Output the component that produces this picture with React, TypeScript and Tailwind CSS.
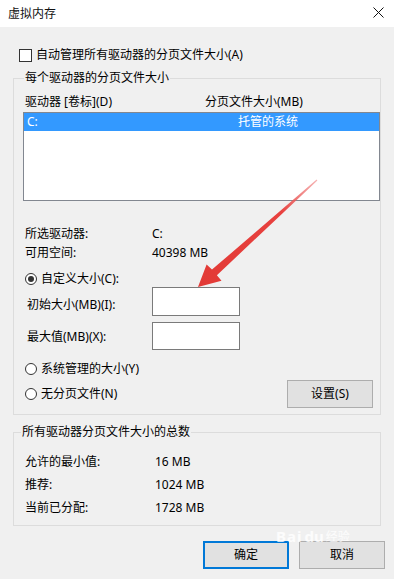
import React from "react";

const FONT = { fontFamily: '"Noto Sans", "Noto Sans CJK SC", sans-serif' };

const Radio = ({ checked, label }: { checked?: boolean; label: string }) => (
  <div className="flex h-[16px] items-center">
    <span className="ml-[11px] flex h-[12px] w-[12px] items-center justify-center rounded-full border border-[#333333] bg-white">
      {checked && <span className="h-[6px] w-[6px] rounded-full bg-[#333333]" />}
    </span>
    <span className="ml-[4px]">{label}</span>
  </div>
);

const InfoRow = ({ label, value, h, valueX }: { label: string; value: string; h: string; valueX: string }) => (
  <div className={`flex items-center ${h}`}>
    <span className={`shrink-0 pl-[11px] ${valueX}`}>{label}</span>
    <span>{value}</span>
  </div>
);

export default function App() {
  return (
    <div
      className="relative h-[579px] w-[394px] overflow-hidden bg-[#f0f0f0] text-[12px] leading-[16px] text-black"
      style={FONT}
    >
      {/* Title bar */}
      <div className="flex h-[27px] items-center justify-between bg-white pl-[8px] pr-[10px]">
        <span className="text-[12px] text-[#111]">虚拟内存</span>
        <svg width="11" height="11" viewBox="0 0 11 11" className="mb-[2px]">
          <path d="M0.5 0.5L10.5 10.5M10.5 0.5L0.5 10.5" stroke="#111" strokeWidth="1" />
        </svg>
      </div>

      <div className="flex flex-col pt-[20px]">
        {/* Auto manage checkbox */}
        <div className="flex h-[16px] items-center pl-[19px]">
          <span className="h-[13px] w-[13px] border border-[#333333] bg-white" />
          <span className="ml-[4px]">自动管理所有驱动器的分页文件大小(A)</span>
        </div>

        {/* Per-drive group */}
        <fieldset className="mx-[13px] mt-[7px] w-[368px] border border-[#dcdcdc] px-0 pb-[6px] pt-[8px]">
          <legend className="ml-[10px] px-[1px] leading-[16px]">每个驱动器的分页文件大小</legend>
          <div className="flex h-[16px] items-center pl-[11px]">
            <span className="w-[180px]">驱动器 [卷标](D)</span>
            <span>分页文件大小(MB)</span>
          </div>
          <div className="ml-[9px] mt-[2px] h-[89px] w-[357px] border border-[#828790] bg-white">
            <div className="flex h-[18px] items-center bg-[#3399ff] text-white">
              <span className="w-[214px] pl-[3px]">C:</span>
              <span>托管的系统</span>
            </div>
          </div>

          <div className="mt-[23px]">
            <InfoRow label="所选驱动器:" value="C:" h="h-[19px]" valueX="w-[138px]" />
            <InfoRow label="可用空间:" value="40398 MB" h="h-[19px]" valueX="w-[138px]" />
          </div>

          <div className="mt-[9px]">
            <Radio checked label="自定义大小(C):" />
          </div>
          <div className="flex h-[29px] items-center">
            <span className="w-[138px] pl-[13px] pt-[6px]">初始大小(MB)(I):</span>
            <span className="h-[29px] w-[88px] border border-[#7a7a7a] bg-white" />
          </div>
          <div className="mt-[6px] flex h-[28px] items-center">
            <span className="w-[138px] pl-[13px] pt-[1px]">最大值(MB)(X):</span>
            <span className="h-[28px] w-[88px] border border-[#7a7a7a] bg-white" />
          </div>

          <div className="mt-[11px]">
            <Radio label="系统管理的大小(Y)" />
          </div>
          <div className="mt-[3px] flex h-[28px] items-center justify-between pr-[7px]">
            <Radio label="无分页文件(N)" />
            <button className="h-[28px] w-[86px] border border-[#adadad] bg-[#e1e1e1]">设置(S)</button>
          </div>
        </fieldset>

        {/* Totals group */}
        <fieldset className="mx-[13px] mt-[9px] w-[368px] border border-[#dcdcdc] px-0 pb-[6px] pt-[10px]">
          <legend className="ml-[7px] px-[1px] leading-[16px]">所有驱动器分页文件大小的总数</legend>
          <InfoRow label="允许的最小值:" value="16 MB" h="h-[23px]" valueX="w-[141px]" />
          <InfoRow label="推荐:" value="1024 MB" h="h-[23px]" valueX="w-[141px]" />
          <InfoRow label="当前已分配:" value="1728 MB" h="h-[23px]" valueX="w-[141px]" />
        </fieldset>

        {/* Dialog buttons */}
        <div className="mt-[15px] flex justify-end gap-[10px] pr-[9px]">
          <button className="h-[28px] w-[86px] border-2 border-[#0078d7] bg-[#e1e1e1]">确定</button>
          <button className="h-[28px] w-[86px] border border-[#adadad] bg-[#e1e1e1]">取消</button>
        </div>
      </div>

      {/* Watermark */}
      <div className="pointer-events-none absolute left-[276px] top-[528px] flex items-end gap-[2px] text-white/80">
        <span className="text-[15px] font-bold leading-[16px] tracking-[1px]">Bai</span>
        <span className="text-[15px] font-bold leading-[16px]">du</span>
        <span className="text-[12px] leading-[14px]">经验</span>
      </div>

      {/* Red annotation arrow */}
      <svg className="pointer-events-none absolute left-0 top-0" width="394" height="579" viewBox="0 0 394 579">
        <defs>
          <linearGradient id="ar" x1="317" y1="180" x2="200" y2="287" gradientUnits="userSpaceOnUse">
            <stop offset="0" stopColor="#f08080" stopOpacity="0.6" />
            <stop offset="0.3" stopColor="#e8413f" />
            <stop offset="1" stopColor="#e23a36" />
          </linearGradient>
        </defs>
        <path
          d="M317.4 180.5 L216.9 275.2 L221.5 280.8 L198 287 L206.6 264.4 L212 269.6 L316.6 179.6 Z"
          fill="url(#ar)"
        />
      </svg>
    </div>
  );
}
